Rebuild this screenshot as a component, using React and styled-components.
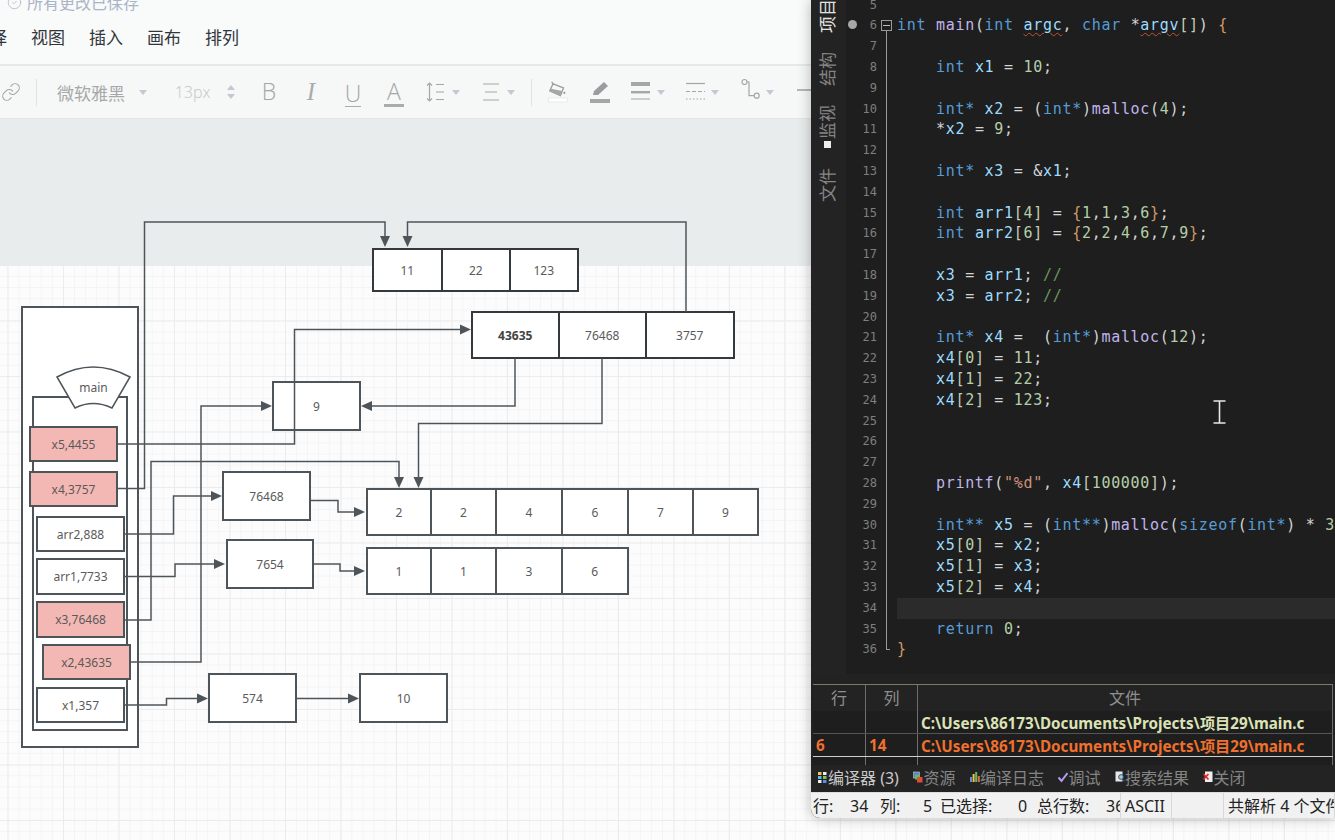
import React from "react";
import styled, { createGlobalStyle } from "styled-components";
import { CircleCheck, Link } from "lucide-react";

const Global = createGlobalStyle`
  html, body { margin: 0; padding: 0; height: 100%; overflow: hidden; background: #fff; }
  #root { height: 100%; }
`;

const CJK = `"Noto Sans", "Noto Sans CJK SC", sans-serif`;
const INK = "#4e555a";
const INK_HEAVY = "#33393c";

const Page = styled.div`
  position: relative;
  width: 1335px;
  height: 840px;
  overflow: hidden;
  display: flex;
  flex-direction: column;
  font-family: ${CJK};
`;

const Header = styled.header`
  height: 64px;
  background: #f9fafa;
  border-bottom: 2px solid #e6e9eb;
  flex: none;
`;
const Saved = styled.div`
  display: flex;
  align-items: center;
  gap: 5px;
  height: 20px;
  margin-top: -8px;
  padding-left: 7px;
  color: #a9b4c6;
  font-size: 16px;
`;
const Menu = styled.nav`
  display: flex;
  gap: 24px;
  margin: 14px 0 0 -27px;
  font-size: 17px;
  line-height: 24px;
  color: #30363a;
`;

const Toolbar = styled.div`
  flex: none;
  height: 52px;
  display: flex;
  align-items: center;
  background: #f6f7f7;
  border-bottom: 1px solid #e4e6e6;
  color: #a9abac;
`;
const Slot = styled.div`
  flex: none;
  width: ${(p) => p.$w}px;
  margin-left: ${(p) => p.$ml || 0}px;
  display: flex;
  align-items: center;
  justify-content: center;
  white-space: nowrap;
`;
const VDivider = styled.div`
  flex: none;
  width: 1px;
  height: 27px;
  margin-left: ${(p) => p.$ml}px;
  background: #dfe3e6;
`;
const FontName = styled(Slot)`
  font-size: 17px;
  color: #a6a8a9;
`;
const SizeText = styled(Slot)`
  font-family: "Open Sans", sans-serif;
  font-weight: 300;
  font-size: 16px;
  color: #c4c6c7;
`;
const Letter = styled(Slot)`
  flex-direction: column;
  height: 30px;
  justify-content: flex-end;
  font-family: "Open Sans", sans-serif;
  font-weight: 300;
  font-size: 23px;
  line-height: 22px;
  color: #a4a6a7;
`;
const ItalicLetter = styled(Letter)`
  font-family: "Liberation Serif", serif;
  font-style: italic;
  font-weight: 400;
  font-size: 25px;
  color: #a9abac;
  justify-content: center;
`;
const LetterBar = styled.div`
  width: ${(p) => p.$w}px;
  height: ${(p) => p.$h}px;
  margin-top: 2px;
  background: #a9abac;
`;
const LineStub = styled.div`
  flex: none;
  width: 20px;
  height: 2px;
  margin-left: 23px;
  margin-top: -5px;
  background: #b4b6b7;
`;

const Caret = ({ ml }) => (
  <Slot $w={8} $ml={ml}>
    <svg width="8" height="5" viewBox="0 0 8 5"><path d="M0 0h8L4 5z" fill="#c2c9d2" /></svg>
  </Slot>
);

const Canvas = styled.main`
  flex: 1;
  display: flex;
  flex-direction: column;
`;
const Band = styled.div`
  flex: none;
  height: 147px;
  background: #e9ecec;
`;
const Grid = styled.div`
  flex: 1;
  background-color: #fcfcfc;
  background-image:
    linear-gradient(to right, #ececec 1px, transparent 1px),
    linear-gradient(to bottom, #ececec 1px, transparent 1px),
    linear-gradient(to right, #f4f4f4 1px, transparent 1px),
    linear-gradient(to bottom, #f4f4f4 1px, transparent 1px);
  background-size: 55.5px 55.5px, 55.5px 55.5px, 11.1px 11.1px, 11.1px 11.1px;
  background-position: 7.5px -1px, 7.5px -1px, 7.5px -1px, 7.5px -1px;
`;

const Diagram = styled.div`
  position: absolute;
  inset: 0;
`;
const Frame = styled.div`
  position: absolute;
  box-sizing: border-box;
  left: ${(p) => p.$x}px;
  top: ${(p) => p.$y}px;
  width: ${(p) => p.$w}px;
  height: ${(p) => p.$h}px;
  background: #fff;
  border: 2px solid ${INK};
`;
const NodeBox = styled(Frame)`
  display: flex;
  align-items: center;
  justify-content: center;
  font-size: 12px;
  color: #5a5a5a;
  background: ${(p) => (p.$hot ? "#f4b8b4" : "#fff")};
`;
const ArrayBox = styled.div`
  position: absolute;
  box-sizing: border-box;
  left: ${(p) => p.$x}px;
  top: ${(p) => p.$y}px;
  height: ${(p) => p.$h}px;
  display: flex;
  background: #fff;
  border: 2px solid ${(p) => (p.$heavy ? INK_HEAVY : INK)};
`;
const Cell = styled.div`
  box-sizing: border-box;
  width: ${(p) => p.$w}px;
  display: flex;
  align-items: center;
  justify-content: center;
  font-size: 12px;
  color: ${(p) => (p.$bold ? "#444" : "#5a5a5a")};
  font-weight: ${(p) => (p.$bold ? 700 : 400)};
  &:not(:last-child) { border-right: 2px solid ${(p) => (p.$heavy ? INK_HEAVY : INK)}; }
`;
const Overlay = styled.svg`
  position: absolute;
  left: 0;
  top: 0;
`;
const MainLabel = styled.div`
  position: absolute;
  left: 57px;
  top: 380px;
  width: 73px;
  text-align: center;
  font-size: 12px;
  line-height: 16px;
  color: #5a5a5a;
`;

const IDE = styled.section`
  position: absolute;
  left: 811px;
  top: 0;
  width: 524px;
  height: 818px;
  display: flex;
  flex-direction: column;
  background: #222;
  border-bottom-left-radius: 9px;
  overflow: hidden;
  box-shadow: 0 0 14px rgba(0, 0, 0, 0.28);
`;
const Workspace = styled.div`
  flex: none;
  height: 674px;
  display: flex;
  overflow: hidden;
  position: relative;
`;
const Rail = styled.div`
  flex: none;
  width: 35px;
  box-sizing: border-box;
  padding-right: 1px;
  background: #232323;
  display: flex;
  flex-direction: column;
  align-items: center;
`;
const RailTab = styled.div`
  writing-mode: vertical-rl;
  text-orientation: sideways;
  transform: rotate(180deg);
  display: flex;
  align-items: center;
  gap: 2px;
  flex: none;
  font-size: 17px;
  line-height: 18px;
  margin-top: ${(p) => p.$mt}px;
  color: ${(p) => (p.$on ? "#e2e2e2" : "#858585")};
`;
const RailMark = styled.span`
  width: 7px;
  height: 7px;
  background: #eee;
`;
const Code = styled.div`
  flex: 1;
  background: #1e1e1e;
  margin-top: -5.4px;
  font-family: "DejaVu Sans Mono", monospace;
  font-size: 15px;
  letter-spacing: 0.7px;
  overflow: hidden;
  min-width: 0;
`;
const Row = styled.div`
  display: flex;
  height: 20.8px;
  line-height: 20.8px;
`;
const LineNo = styled.div`
  position: relative;
  flex: none;
  width: 31px;
  text-align: right;
  font-size: 12px;
  letter-spacing: 0;
  color: #7f7f7f;
`;
const Breakpoint = styled.span`
  position: absolute;
  left: 2px;
  top: 5px;
  width: 9px;
  height: 9px;
  border-radius: 50%;
  background: #a8a8a8;
`;
const Fold = styled.div`
  position: relative;
  flex: none;
  width: 20px;
  &::before {
    content: "";
    position: absolute;
    left: 8.5px;
    width: 1px;
    background: #9a9a9a;
    top: ${(p) => (p.$k === "open" ? "15px" : "0")};
    bottom: ${(p) => (p.$k === "end" ? "10px" : "0")};
    display: ${(p) => (p.$k ? "block" : "none")};
  }
`;
const FoldBox = styled.span`
  position: absolute;
  left: 4px;
  top: 5px;
  width: 9px;
  height: 9px;
  border: 1px solid #9a9a9a;
  background: #1e1e1e;
  &::after {
    content: "";
    position: absolute;
    left: 1px;
    right: 1px;
    top: 4px;
    height: 1px;
    background: #bbb;
  }
`;
const FoldEnd = styled.span`
  position: absolute;
  left: 9px;
  top: 10px;
  width: 4px;
  height: 1px;
  background: #9a9a9a;
`;
const CodeLine = styled.div`
  flex: 1;
  white-space: pre;
  min-width: 0;
  background: ${(p) => (p.$cur ? "#2b2b2b" : "transparent")};
`;
const COLORS = {
  kw: "#569cd6",
  fn: "#c0b4ec",
  id: "#9cdcfe",
  num: "#b5cea8",
  str: "#ce9178",
  brace: "#d19a66",
  br: "#c5cdb5",
  cm: "#6a9955",
  p: "#d4d4d4",
};
const Tok = styled.span`
  color: ${(p) => COLORS[p.$t]};
  ${(p) => (p.$wavy ? "text-decoration: underline wavy #c2552c 1px; text-underline-offset: 2px;" : "")}
`;
const IBeam = styled.svg`
  position: absolute;
  left: 402px;
  top: 400px;
`;

const Table = styled.div`
  flex: none;
  height: 80px;
  margin: 10px 2px 0 2px;
  overflow: hidden;
  border-top: 1px solid #7c7c5e;
  font-size: 15.2px;
`;
const TRow = styled.div`
  display: grid;
  grid-template-columns: 53px 52px 1fr;
  height: ${(p) => p.$h}px;
  box-sizing: border-box;
  background: ${(p) => p.$bg};
  border-bottom: 1px solid ${(p) => p.$line};
`;
const TCell = styled.div`
  box-sizing: border-box;
  border-right: 1px solid #6e6e6e;
  padding-left: 3px;
  display: flex;
  align-items: center;
  white-space: nowrap;
  overflow: hidden;
  font-weight: 700;
  color: ${(p) => p.$c};
`;
const THead = styled.div`
  box-sizing: border-box;
  border-right: 1px solid #6e6e6e;
  text-align: center;
  line-height: 26px;
  font-size: 16px;
  color: #8f8f8f;
`;

const Tabs = styled.div`
  flex: none;
  height: 27px;
  box-sizing: border-box;
  padding: 0 0 3px 7px;
  display: flex;
  align-items: center;
  gap: 14.5px;
  background: #232323;
  font-size: 16px;
`;
const Tab = styled.div`
  display: flex;
  align-items: center;
  white-space: nowrap;
  color: ${(p) => (p.$on ? "#c9c9c9" : "#858585")};
`;

const Status = styled.footer`
  flex: none;
  height: 27px;
  display: flex;
  background: #f1f1f1;
  color: #222;
  font-size: 16px;
  line-height: 26px;
  border-top: 1px solid #ddd;
  box-sizing: border-box;
`;
const StatusCell = styled.div`
  flex: none;
  width: ${(p) => p.$w}px;
  box-sizing: border-box;
  display: flex;
  overflow: hidden;
  white-space: nowrap;
  padding-left: ${(p) => p.$pl || 0}px;
  border-right: 1px solid #d8d8d8;
`;
const Field = styled.span`
  flex: none;
  width: ${(p) => p.$w}px;
`;

/* ---------- data ---------- */
const menuItems = ["选择", "视图", "插入", "画布", "排列"];
const vars = [
  ["x5,4455", 29, 426, 89, 36, true],
  ["x4,3757", 29, 471, 89, 36, true],
  ["arr2,888", 36, 516, 89, 36, false],
  ["arr1,7733", 36, 558, 89, 37, false],
  ["x3,76468", 36, 601, 89, 37, true],
  ["x2,43635", 42, 644, 89, 36, true],
  ["x1,357", 36, 687, 89, 36, false],
  ["9", 272, 381, 89, 50, false],
  ["76468", 222, 471, 89, 50, false],
  ["7654", 226, 539, 88, 50, false],
  ["574", 208, 673, 89, 50, false],
  ["10", 359, 673, 89, 50, false],
];
const arrays = [
  { x: 372, y: 248, h: 44, heavy: true, cells: [["11", 68.5], ["22", 68.5], ["123", 65.5]] },
  { x: 471, y: 311, h: 48, heavy: true, cells: [["43635", 86.5, true], ["76468", 87.5], ["3757", 85.5]] },
  { x: 366, y: 488, h: 48, cells: [["2", 64], ["2", 65], ["4", 66], ["6", 66], ["7", 65], ["9", 63]] },
  { x: 366, y: 547, h: 48, cells: [["1", 64], ["1", 65], ["3", 66], ["6", 63.5]] },
];
const wires = [
  ["M117 444H294.5V329.5H462", [471, 329.5, "r"]],
  ["M117 488.5H144.5V222H385V238", [385, 247, "d"]],
  ["M686 312V222H407.5V238", [407.5, 247, "d"]],
  ["M515 358V406H370", [361, 406, "l"]],
  ["M602 358V423.5H418.5V479", [418.5, 488, "d"]],
  ["M124 620H151V461.5H399V479", [399, 488, "d"]],
  ["M130 662H201V406H263", [272, 406, "r"]],
  ["M124 534H173.5V496H213", [222, 496, "r"]],
  ["M310 500.5H338V512H356", [365, 512, "r"]],
  ["M124 576.5H175V564H216", [225, 564, "r"]],
  ["M313.5 564H340V571H356", [365, 571, "r"]],
  ["M124 705H166.5V698.5H199", [208, 698.5, "r"]],
  ["M296 698.5H350", [359, 698.5, "r"]],
];
const arrowPath = ([x, y, d]) => {
  if (d === "r") return `M${x} ${y}l-11 -5v10z`;
  if (d === "l") return `M${x} ${y}l11 -5v10z`;
  return `M${x} ${y}l-5 -11h10z`;
};

const source = [
  [5, ""],
  [6, "int main(int argc, char *argv[]) {"],
  [7, ""],
  [8, "    int x1 = 10;"],
  [9, ""],
  [10, "    int* x2 = (int*)malloc(4);"],
  [11, "    *x2 = 9;"],
  [12, ""],
  [13, "    int* x3 = &x1;"],
  [14, ""],
  [15, "    int arr1[4] = {1,1,3,6};"],
  [16, "    int arr2[6] = {2,2,4,6,7,9};"],
  [17, ""],
  [18, "    x3 = arr1; //"],
  [19, "    x3 = arr2; //"],
  [20, ""],
  [21, "    int* x4 =  (int*)malloc(12);"],
  [22, "    x4[0] = 11;"],
  [23, "    x4[1] = 22;"],
  [24, "    x4[2] = 123;"],
  [25, ""],
  [26, ""],
  [27, ""],
  [28, '    printf("%d", x4[100000]);'],
  [29, ""],
  [30, "    int** x5 = (int**)malloc(sizeof(int*) * 3);"],
  [31, "    x5[0] = x2;"],
  [32, "    x5[1] = x3;"],
  [33, "    x5[2] = x4;"],
  [34, ""],
  [35, "    return 0;"],
  [36, "}"],
];

const tokenRe = /(\/\/.*|"[^"]*"|\bint\*{0,2}|\bchar\b|\breturn\b|\bsizeof\b|\bmain\b|\bmalloc\b|\bprintf\b|\b\d+\b|[A-Za-z_]\w*|[{}]|[\[\]]|\s+|.)/g;
const classify = (t) => {
  if (t.startsWith("//")) return "cm";
  if (t.startsWith('"')) return "str";
  if (/^(int\*{0,2}|char|return|sizeof)$/.test(t)) return "kw";
  if (/^(main|malloc|printf)$/.test(t)) return "fn";
  if (/^\d+$/.test(t)) return "num";
  if (/^[A-Za-z_]/.test(t)) return "id";
  if (/^[{}]$/.test(t)) return "brace";
  if (/^[\[\]]$/.test(t)) return "br";
  return "p";
};
const renderCode = (line) =>
  (line.match(tokenRe) || []).map((t, i) => (
    <Tok key={i} $t={classify(t)} $wavy={t === "argc" || t === "argv"}>{t}</Tok>
  ));

const PATH = "C:\\Users\\86173\\Documents\\Projects\\项目29\\main.c";

/* ---------- tab icons ---------- */
const IconCompile = () => (
  <svg width="10" height="12" viewBox="0 0 10 12">
    <rect x="0" y="1" width="3.5" height="3" fill="#f2c14e" /><rect x="5" y="1" width="3.5" height="3" fill="#eee" />
    <rect x="0" y="5" width="3.5" height="3" fill="#4fc3f7" /><rect x="5" y="5" width="3.5" height="3" fill="#8bc34a" />
    <rect x="0" y="9" width="3.5" height="3" fill="#eee" /><rect x="5" y="9" width="3.5" height="3" fill="#5c8fe6" />
  </svg>
);
const IconRes = () => (
  <svg width="10" height="12" viewBox="0 0 10 12">
    <rect x="0.5" y="1" width="6" height="6" fill="#5b7fd6" stroke="#ccc" strokeWidth=".6" />
    <rect x="2" y="3.5" width="5" height="5" fill="#5fbf5f" />
    <rect x="4" y="6" width="5.5" height="5.5" fill="#e04b3a" />
  </svg>
);
const IconLog = () => (
  <svg width="10" height="12" viewBox="0 0 10 12">
    <rect x="0" y="6" width="2" height="5" fill="#5b8fe6" /><rect x="2.6" y="3" width="2" height="8" fill="#f2c14e" />
    <rect x="5.2" y="1" width="2" height="10" fill="#5fbf5f" /><rect x="7.8" y="5" width="2" height="6" fill="#e0703a" />
  </svg>
);
const IconCheck = () => (
  <svg width="10" height="12" viewBox="0 0 10 12"><path d="M0.5 6.5L3.5 10L9.5 2" fill="none" stroke="#b79cf0" strokeWidth="2" /></svg>
);
const IconSearch = () => (
  <svg width="10" height="12" viewBox="0 0 10 12">
    <rect x="0.5" y="0.5" width="7" height="10" fill="#e8e8e8" />
    <circle cx="6" cy="6" r="2.4" fill="#8fd0ee" stroke="#445" strokeWidth=".9" /><path d="M7.6 7.8L9.8 10.5" stroke="#445" strokeWidth="1.2" />
  </svg>
);
const IconClose = () => (
  <svg width="10" height="12" viewBox="0 0 10 12">
    <rect x="2" y="0.5" width="7.5" height="10.5" fill="#eee" />
    <path d="M0.5 3L5.5 8.5M5.5 3L0.5 8.5" stroke="#e02b2b" strokeWidth="1.7" />
  </svg>
);

export default function App() {
  return (
    <Page>
      <Global />
      <Header>
        <Saved>
          <CircleCheck size={15} strokeWidth={1.2} />
          <span>所有更改已保存</span>
        </Saved>
        <Menu>{menuItems.map((m) => <span key={m}>{m}</span>)}</Menu>
      </Header>

      <Toolbar>
        <Slot $w={22}><Link size={20} strokeWidth={1.3} color="#a4a6a7" /></Slot>
        <VDivider $ml={14} />
        <FontName $w={68} $ml={20}>微软雅黑</FontName>
        <Caret ml={14} />
        <SizeText $w={35} $ml={28}>13px</SizeText>
        <Slot $w={8} $ml={17}>
          <svg width="8" height="16" viewBox="0 0 8 16"><path d="M0 6h8L4 1zM0 10h8l-4 5z" fill="#c2c9d2" /></svg>
        </Slot>
        <Letter $w={20} $ml={24}>B<LetterBar $w={0} $h={3} /></Letter>
        <ItalicLetter $w={20} $ml={22}>I</ItalicLetter>
        <Letter $w={20} $ml={22}>U<LetterBar $w={16} $h={1.5} /></Letter>
        <Letter $w={20} $ml={21}>A<LetterBar $w={20} $h={3} /></Letter>
        <Slot $w={20} $ml={21}>
          <svg width="20" height="24" viewBox="0 0 20 24" fill="none" stroke="#a4a6a7">
            <path d="M4.5 3V21M2 5.5L4.5 3L7 5.5M2 18.5L4.5 21L7 18.5M11 4.5H19M11 12H19M11 19.5H19" strokeWidth="1.2" />
          </svg>
        </Slot>
        <Caret ml={7} />
        <Slot $w={18} $ml={22}>
          <svg width="18" height="24" viewBox="0 0 18 24" fill="none" stroke="#a4a6a7">
            <path d="M1 4H17M3 12H15M1 20H17" strokeWidth="1.2" />
          </svg>
        </Slot>
        <Caret ml={7} />
        <VDivider $ml={16} />
        <Slot $w={20} $ml={16}>
          <svg width="22" height="30" viewBox="0 0 22 30" fill="none">
            <path d="M4 4L6.5 7" stroke="#9a9c9d" strokeWidth="1.3" />
            <path d="M5.5 6L17 10.5L13.7 19L2 13.7Z" stroke="#9a9c9d" strokeWidth="1.5" />
            <path d="M3.5 11.5L15.5 14L13.7 19L2 13.7Z" fill="#a4a6a7" />
            <circle cx="18" cy="16" r="1.2" fill="#9a9c9d" />
            <rect x="0.5" y="21.5" width="21" height="4.5" fill="#fff" stroke="#eaeaea" />
          </svg>
        </Slot>
        <Slot $w={20} $ml={22}>
          <svg width="20" height="30" viewBox="0 0 20 30">
            <path d="M3 18L4 14L14 5L18 9L8 18Z" fill="#9a9c9d" />
            <rect x="0" y="22" width="20" height="4" fill="#a4a6a7" />
          </svg>
        </Slot>
        <Slot $w={20} $ml={21}>
          <svg width="20" height="24" viewBox="0 0 20 24" fill="#a4a6a7">
            <rect y="2" width="19" height="4" /><rect y="11" width="19" height="2.4" /><rect y="18.5" width="19" height="1" />
          </svg>
        </Slot>
        <Caret ml={6} />
        <Slot $w={20} $ml={20}>
          <svg width="20" height="24" viewBox="0 0 20 24" fill="none" stroke="#a4a6a7" strokeWidth="1.2">
            <path d="M1 3.5H20" /><path d="M1 11.5H20" strokeDasharray="4 2" /><path d="M1 19H20" strokeDasharray="1.5 2" />
          </svg>
        </Slot>
        <Caret ml={6} />
        <Slot $w={20} $ml={22}>
          <svg width="20" height="28" viewBox="0 0 20 28" fill="none" stroke="#a4a6a7" strokeWidth="1.2">
            <circle cx="3.5" cy="4" r="2.5" /><circle cx="15.7" cy="17.7" r="2.5" />
            <path d="M6 4H8V17.7H13.2" />
          </svg>
        </Slot>
        <Caret ml={5} />
        <LineStub />
      </Toolbar>

      <Canvas>
        <Band />
        <Grid />
      </Canvas>

      <Diagram>
        <Frame $x={21} $y={306} $w={118} $h={442} />
        <Frame $x={32} $y={396} $w={96} $h={335} />
        <Overlay width="811" height="840" viewBox="0 0 811 840">
          <path d="M57 377Q93 357 130 377L112 408Q93 399 75 408Z" fill="#fff" stroke={INK} strokeWidth="1.5" />
        </Overlay>
        <MainLabel>main</MainLabel>
        {vars.map(([t, x, y, w, h, hot]) => (
          <NodeBox key={t} $x={x} $y={y} $w={w} $h={h} $hot={hot}>{t}</NodeBox>
        ))}
        {arrays.map((a) => (
          <ArrayBox key={a.x + "-" + a.y} $x={a.x} $y={a.y} $h={a.h} $heavy={a.heavy}>
            {a.cells.map(([t, w, b], i) => (
              <Cell key={i} $w={w} $bold={b} $heavy={a.heavy}>{t}</Cell>
            ))}
          </ArrayBox>
        ))}
        <Overlay width="811" height="840" viewBox="0 0 811 840">
          {wires.map(([d, tip], i) => (
            <g key={i}>
              <path d={d} fill="none" stroke={INK} strokeWidth="1.5" />
              <path d={arrowPath(tip)} fill={INK} />
            </g>
          ))}
        </Overlay>
      </Diagram>

      <IDE>
        <Workspace>
          <Rail>
            <RailTab $on $mt={-1}>项目</RailTab>
            <RailTab $mt={19}>结构</RailTab>
            <RailTab $mt={19}><RailMark />监视</RailTab>
            <RailTab $mt={20}>文件</RailTab>
          </Rail>
          <Code>
            {source.map(([n, text]) => (
              <Row key={n}>
                <LineNo>{n === 6 && <Breakpoint />}{n}</LineNo>
                <Fold $k={n === 6 ? "open" : n === 36 ? "end" : n > 6 ? "line" : ""}>
                  {n === 6 && <FoldBox />}
                  {n === 36 && <FoldEnd />}
                </Fold>
                <CodeLine $cur={n === 34}>{renderCode(text)}</CodeLine>
              </Row>
            ))}
          </Code>
          <IBeam width="13" height="24" viewBox="0 0 13 24" fill="none" stroke="#e8e8e8" strokeWidth="1.6">
            <path d="M0.5 1H12.5M0.5 23H12.5M6.5 1V23" />
          </IBeam>
        </Workspace>

        <Table>
          <TRow $h={26} $bg="#232323" $line="transparent">
            <THead>行</THead><THead>列</THead><THead>文件</THead>
          </TRow>
          <TRow $h={23} $bg="#1e1e1e" $line="#555">
            <TCell /><TCell /><TCell $c="#dbe3b6">{PATH}</TCell>
          </TRow>
          <TRow $h={23} $bg="#1e1e1e" $line="#cfcfcf">
            <TCell $c="#f0702e">6</TCell><TCell $c="#f0702e">14</TCell><TCell $c="#f0702e">{PATH}</TCell>
          </TRow>
          <TRow $h={30} $bg="#1e1e1e" $line="#555">
            <TCell /><TCell /><TCell $c="#f0702e">{PATH}</TCell>
          </TRow>
        </Table>

        <Tabs>
          <Tab $on><IconCompile />编译器 (3)</Tab>
          <Tab><IconRes />资源</Tab>
          <Tab><IconLog />编译日志</Tab>
          <Tab><IconCheck />调试</Tab>
          <Tab><IconSearch />搜索结果</Tab>
          <Tab><IconClose />关闭</Tab>
        </Tabs>

        <Status>
          <StatusCell $w={310} $pl={2}>
            <Field $w={37}>行:</Field>
            <Field $w={30}>34</Field>
            <Field $w={43}>列:</Field>
            <Field $w={17}>5</Field>
            <Field $w={78}>已选择:</Field>
            <Field $w={19}>0</Field>
            <Field $w={69}>总行数:</Field>
            <Field $w={20}>36</Field>
          </StatusCell>
          <StatusCell $w={51} $pl={4}>ASCII</StatusCell>
          <StatusCell $w={52} />
          <StatusCell $w={111} $pl={4}>共解析 4 个文件</StatusCell>
        </Status>
      </IDE>
    </Page>
  );
}
